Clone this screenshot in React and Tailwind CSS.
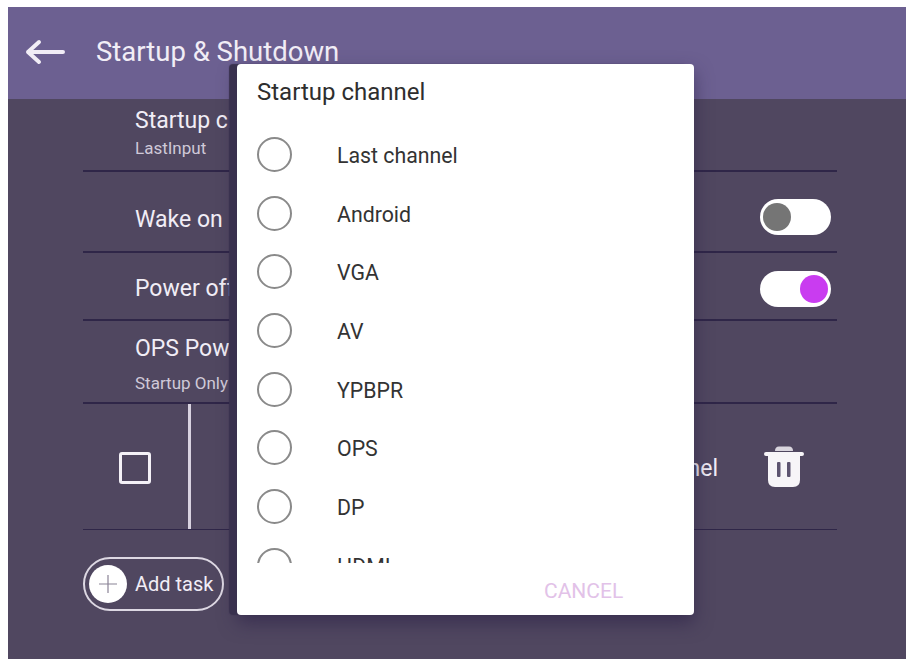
import React from 'react';

const channels = ['Last channel', 'Android', 'VGA', 'AV', 'YPBPR', 'OPS', 'DP', 'HDMI'];

function Toggle({ on }) {
  return (
    <div className={`flex h-9 w-[71px] items-center rounded-full bg-white px-[3px] ${on ? 'justify-end' : 'justify-start'}`}>
      <div className={`h-7 w-7 rounded-full ${on ? 'bg-[#c93cf0]' : 'bg-[#757575]'}`} />
    </div>
  );
}

function TrashIcon() {
  return (
    <svg width="40" height="42" viewBox="0 0 40 42">
      <path fill="#d9d5de" d="M11 5 Q11 0.5 15 0.5 H25 Q29 0.5 29 5 Z" />
      <path fill="#f7f5f8" d="M2 6 H38 Q40 6 40 8 Q40 10 38 10 H36 V34 Q36 41 29 41 H11 Q4 41 4 34 V10 H2 Q0 10 0 8 Q0 6 2 6 Z" />
      <rect x="13" y="16" width="3.5" height="15" rx="1" fill="#5d5470" />
      <rect x="23" y="16" width="3.5" height="15" rx="1" fill="#5d5470" />
    </svg>
  );
}

export default function App() {
  return (
    <div className="relative h-[659px] w-[910px] overflow-hidden bg-white pl-2 pr-1 pt-[7px] font-['Roboto',sans-serif]">
      <div className="flex h-full flex-col bg-[#504760]">
        <header className="flex h-[92px] shrink-0 items-center bg-[#6c6091] pb-[2px] pl-[17px] text-[#f1edf6]">
          <svg width="40" height="26" viewBox="0 0 40 26" fill="none" stroke="currentColor" strokeWidth="4" strokeLinecap="round" strokeLinejoin="round">
            <path d="M38 13 H3 M14 3 L3 13 L14 23" />
          </svg>
          <span className="ml-[31px] text-[27.5px]">Startup &amp; Shutdown</span>
        </header>

        <main className="ml-[75px] mr-[69px] text-[23px] text-[#f1edf6]">
          <div className="h-[73px] border-b-2 border-[#2f2648] pl-[52px] pt-[8px]">
            <div className="leading-[28px]">Startup channel</div>
            <div className="mt-[3px] text-[17px] leading-[20px] text-[#cfc9d8]">LastInput</div>
          </div>
          <div className="flex h-[81px] items-center justify-between border-b-2 border-[#2f2648] pl-[52px] pr-[6px] pt-[11px]">
            <span className="pt-[7px]">Wake on LAN</span>
            <Toggle />
          </div>
          <div className="flex h-[68px] items-center justify-between border-b-2 border-[#2f2648] pl-[52px] pr-[6px] pt-[6px]">
            <span>Power off</span>
            <Toggle on />
          </div>
          <div className="h-[83px] border-b-2 border-[#2f2648] pl-[52px] pt-[14px]">
            <div className="leading-[28px]">OPS Power</div>
            <div className="mt-[10px] text-[17px] leading-[20px] text-[#cfc9d8]">Startup Only</div>
          </div>
          <div className="flex h-[126px] items-center border-b border-[#2f2648]">
            <div className="ml-9 mt-[2px] h-8 w-8 rounded-[3px] border-[3px] border-[#f4f1f7]" />
            <div className="ml-[37px] h-full w-[3px] bg-[#d8d2e0]" />
            <span className="ml-auto pt-[5px]">Last channel</span>
            <div className="ml-[46px] mr-[33px]">
              <TrashIcon />
            </div>
          </div>
          <button className="mt-[27px] flex h-[54px] w-[141px] items-center rounded-full border-2 border-[#ddd8e3] pl-1 text-[20px]">
            <span className="flex h-[38px] w-[38px] items-center justify-center rounded-full bg-white text-[#8a8396]">
              <svg width="20" height="20" viewBox="0 0 20 20" stroke="currentColor" strokeWidth="1.2">
                <path d="M10 1 V19 M1 10 H19" />
              </svg>
            </span>
            <span className="ml-2">Add task</span>
          </button>
        </main>
      </div>

      {/* channel picker dialog */}
      <div className="absolute left-[237px] top-[64px] flex h-[551px] w-[457px] flex-col rounded bg-white shadow-[-8px_0_1px_#39314e,0_8px_18px_rgba(40,30,70,0.55)]">
        <div className="h-[61px] shrink-0 pl-5 pt-[14px] text-[24px] leading-[28px] text-[#2e2e2e]">Startup channel</div>
        <div className="h-[438px] shrink-0 overflow-hidden">
          {channels.map((name) => (
            <div key={name} className="flex h-[58.7px] items-center pl-5">
              <div className="h-[35px] w-[35px] rounded-full border-2 border-[#8a8a8a]" />
              <span className="ml-[45px] pt-[3px] text-[21.3px] text-[#333333]">{name}</span>
            </div>
          ))}
        </div>
        <div className="pl-[307px] pt-[14px] text-[21px] leading-[28px] text-[#e2c2e8]">CANCEL</div>
      </div>
    </div>
  );
}
